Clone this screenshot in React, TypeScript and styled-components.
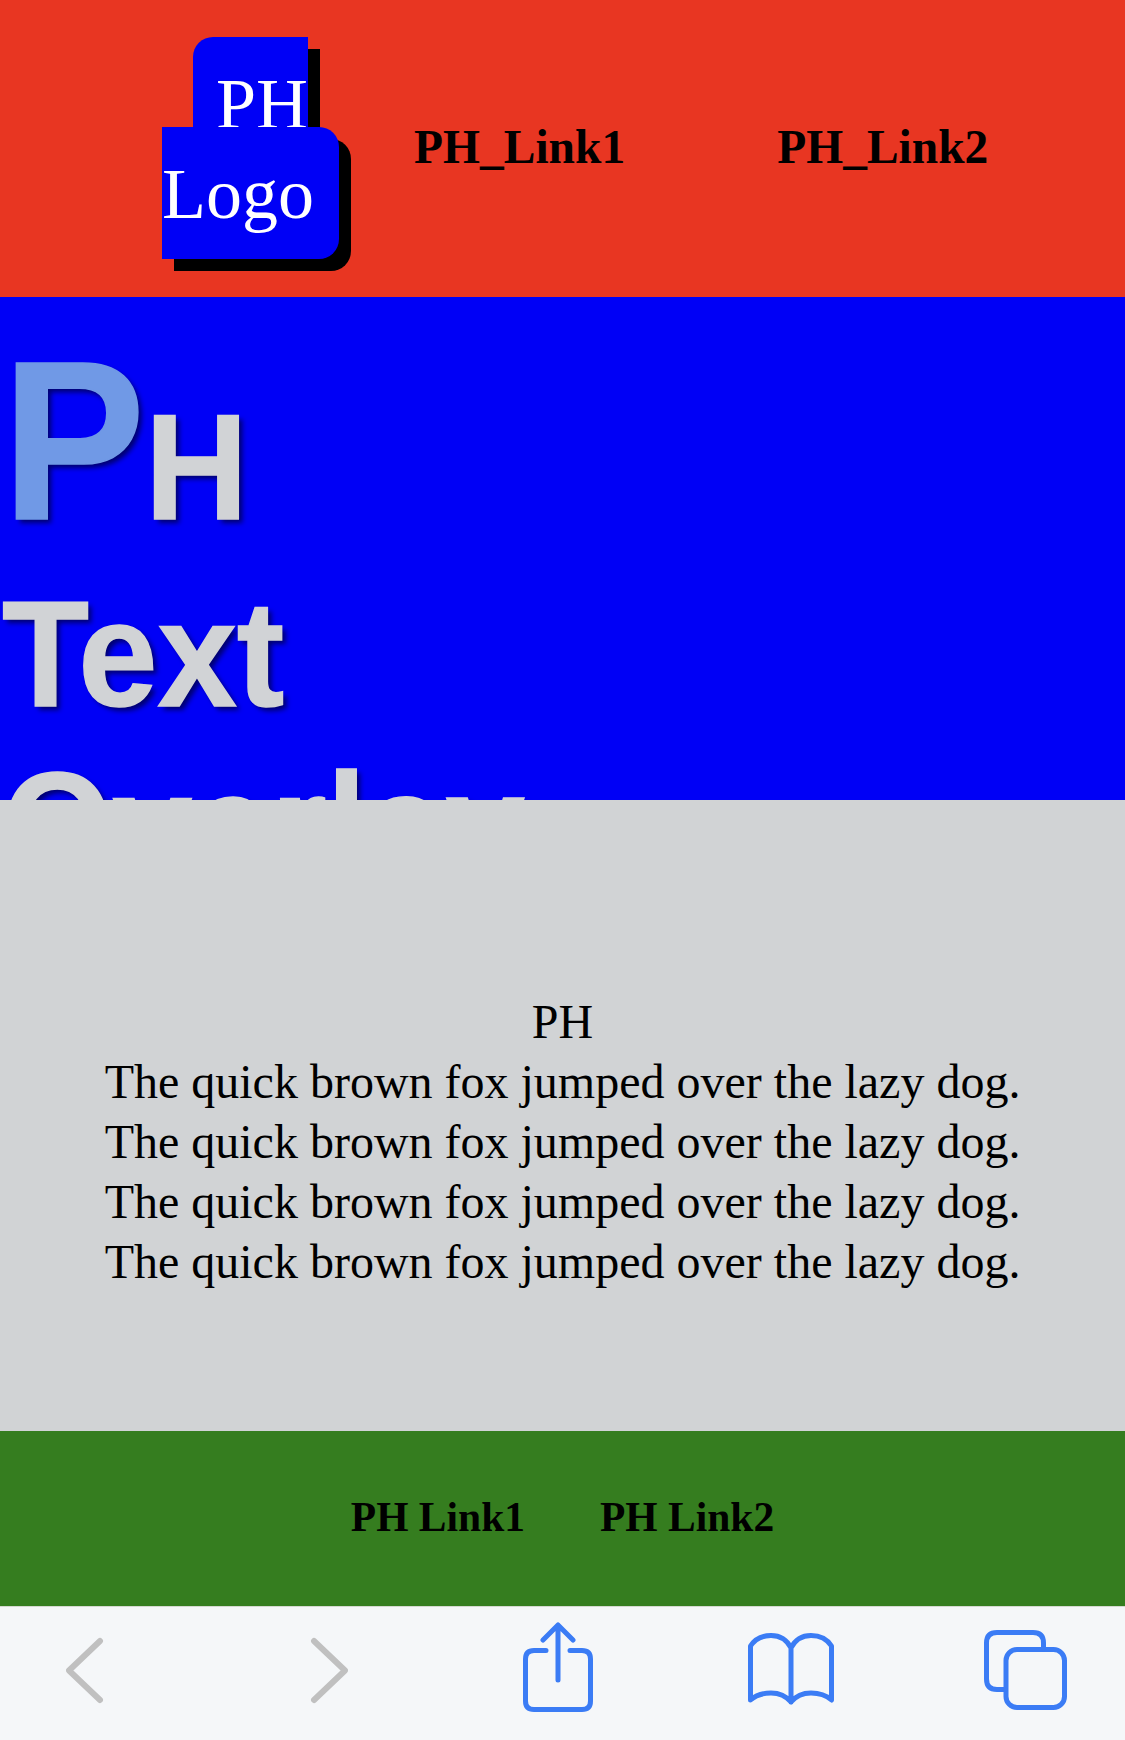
import React from 'react';
import styled, { createGlobalStyle } from 'styled-components';

const GlobalStyle = createGlobalStyle`
  html, body {
    margin: 0;
    padding: 0;
    background: #f5f7f9;
  }
`;

const Page = styled.div`
  width: 1125px;
  height: 1740px;
  display: flex;
  flex-direction: column;
  overflow: hidden;
  font-family: 'Liberation Serif', 'Times New Roman', serif;
`;

const Header = styled.header`
  height: 297px;
  flex: none;
  display: flex;
  align-items: center;
  padding-left: 135px;
  background: #e83622;
`;

const LogoWrap = styled.div`
  width: 231px;
  flex: none;
  text-align: center;
  font-size: 72px;
  line-height: 90px;
  color: #fff;
  filter: drop-shadow(12px 12px 0 #000);
`;

const Logo = styled.span`
  padding: 27px 25px 25px 23px;
  background: #0000f6;
  border-radius: 20px;
`;

const HeaderNav = styled.nav`
  display: flex;
  gap: 152px;
  padding: 0 0 4px 48px;
`;

const HeaderLink = styled.a`
  font-size: 47.5px;
  font-weight: 700;
  color: #000;
`;

const Hero = styled.section`
  height: 503px;
  flex: none;
  overflow: hidden;
  background: #0000f6;
`;

const HeroText = styled.div`
  padding-left: 2px;
  transform: scaleX(0.95);
  transform-origin: left top;
  font-family: 'Liberation Sans', Arial, sans-serif;
  font-weight: 700;
  font-size: 150px;
  line-height: 172px;
  color: #d1d3d6;
  -webkit-text-stroke: 1.5px currentColor;
  text-shadow: 4px 4px 6px rgba(0, 0, 0, 0.55);
`;

const HeroLead = styled.div`
  height: 271px;
  box-sizing: border-box;
  padding-bottom: 14px;
  display: flex;
  align-items: flex-end;
`;

const HeroInitial = styled.span`
  font-size: 226px;
  line-height: 1;
  color: #7099e6;
`;

const HeroLine = styled.div``;

const Body = styled.section`
  height: 631px;
  flex: none;
  box-sizing: border-box;
  padding-top: 192px;
  background: #d1d3d5;
  text-align: center;
  font-size: 48px;
  line-height: 60px;
  color: #000;
`;

const BodyLine = styled.div``;

const Footer = styled.footer`
  height: 175px;
  flex: none;
  box-sizing: border-box;
  padding-bottom: 4px;
  display: flex;
  align-items: center;
  justify-content: center;
  gap: 75px;
  background: #357d1f;
`;

const FooterLink = styled.a`
  font-size: 41.5px;
  font-weight: 700;
  color: #000;
`;

const Toolbar = styled.div`
  flex: 1;
  display: flex;
  align-items: center;
  padding: 0 0 14px 66px;
  background: #f5f7f9;
  border-top: 1px solid #d4d9d0;
`;

const ToolIcon = styled.svg`
  display: block;
  flex: none;
  height: 90px;
  margin-left: ${p => p.$gap || 0}px;
  fill: none;
  stroke-linecap: round;
  stroke-linejoin: round;
  stroke: ${p => (p.$muted ? '#c0c0c0' : '#3b7cf5')};
  stroke-width: ${p => (p.$muted ? 6 : 5)};
`;

const App = () => (
  <Page>
    <GlobalStyle />
    <Header>
      <LogoWrap>
        <Logo>PH Logo</Logo>
      </LogoWrap>
      <HeaderNav>
        <HeaderLink>PH_Link1</HeaderLink>
        <HeaderLink>PH_Link2</HeaderLink>
      </HeaderNav>
    </Header>
    <Hero>
      <HeroText>
        <HeroLead>
          <span>
            <HeroInitial>P</HeroInitial>H
          </span>
        </HeroLead>
        <HeroLine>Text</HeroLine>
        <HeroLine>Overlay</HeroLine>
      </HeroText>
    </Hero>
    <Body>
      <BodyLine>PH</BodyLine>
      <BodyLine>The quick brown fox jumped over the lazy dog.</BodyLine>
      <BodyLine>The quick brown fox jumped over the lazy dog.</BodyLine>
      <BodyLine>The quick brown fox jumped over the lazy dog.</BodyLine>
      <BodyLine>The quick brown fox jumped over the lazy dog.</BodyLine>
    </Body>
    <Footer>
      <FooterLink>PH Link1</FooterLink>
      <FooterLink>PH Link2</FooterLink>
    </Footer>
    <Toolbar>
      <ToolIcon $muted width="38" viewBox="0 0 38 90">
        <path d="M34 19 L3 48.5 L34 78" />
      </ToolIcon>
      <ToolIcon $muted $gap={206} width="38" viewBox="0 0 38 90">
        <path d="M4 19 L35 48.5 L4 78" />
      </ToolIcon>
      <ToolIcon $gap={175} width="72" viewBox="0 0 72 90">
        <path d="M23 28.5 H11 Q2.5 28.5 2.5 37 V79 Q2.5 87.5 11 87.5 H59 Q67.5 87.5 67.5 79 V37 Q67.5 28.5 59 28.5 H47" />
        <path d="M35 58 V3 M20 18 L35 3 L50 18" />
      </ToolIcon>
      <ToolIcon $gap={153} width="86" viewBox="0 0 86 90">
        <path d="M43 26 C39 18 32 13.5 23 13.5 C14 13.5 7 17 2.5 24 V78 C7 74 14 71 23 71 C32 71 38 74 43 80 C48 74 54 71 63 71 C72 71 79 74 83.5 78 V24 C79 17 72 13.5 63 13.5 C54 13.5 47 18 43 26 V80" />
      </ToolIcon>
      <ToolIcon $gap={149} width="86" viewBox="0 0 86 90">
        <rect x="23" y="27.5" width="58.5" height="58" rx="11" />
        <path d="M22 67.5 H14 Q3.5 67.5 3.5 57 V21 Q3.5 10.5 14 10.5 H50 Q60.5 10.5 60.5 21 V27" />
      </ToolIcon>
    </Toolbar>
  </Page>
);

export default App;
